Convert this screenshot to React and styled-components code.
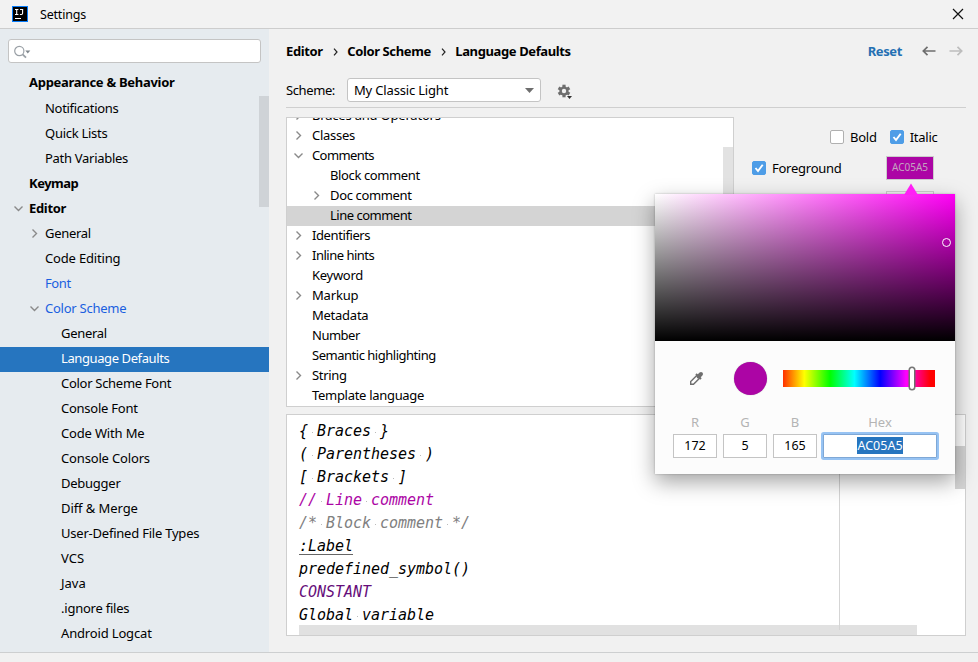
import React from "react";
import styled, { createGlobalStyle, css } from "styled-components";

const UI = `"Noto Sans", "Open Sans", sans-serif`;

const Global = createGlobalStyle`
  * { box-sizing: border-box; }
  body { margin: 0; background: #f2f2f2; overflow: hidden; }
`;

const Window = styled.div`
  position: relative;
  width: 978px;
  height: 662px;
  display: flex;
  flex-direction: column;
  overflow: hidden;
  background: #f1f1f1;
  color: #000;
  font: 13px/20px ${UI};
  white-space: nowrap;
`;

const TitleBar = styled.header`
  height: 29px;
  flex: none;
  display: flex;
  align-items: center;
  padding: 0 14px 0 12px;
  border-bottom: 1px solid #cdcdcd;
  background: #f2f2f2;
`;
const Logo = styled.svg`
  display: block;
  margin-right: 12px;
`;
const TitleText = styled.span`
  flex: 1;
  padding-top: 2px;
  font-size: 12.5px;
  letter-spacing: -0.2px;
`;

const Body = styled.div`
  height: 623px;
  display: flex;
`;
const Footer = styled.footer`
  flex: 1;
  border-top: 1px solid #cdcfd0;
`;

const Sidebar = styled.aside`
  width: 269px;
  flex: none;
  background: #e6ebef;
  padding-top: 10px;
`;
const SearchBox = styled.div`
  width: 253px;
  height: 24px;
  margin-left: 8px;
  padding: 4px 0 0 5px;
  border: 1px solid #c4c4c4;
  border-radius: 3px;
  background: #fff;
`;
const NavArea = styled.div`
  display: flex;
  margin-top: 9px;
  position: relative;
`;
const NavList = styled.nav`
  flex: 1;
`;
const NavRow = styled.div`
  height: 25px;
  display: flex;
  align-items: center;
  padding-left: ${(p) => 13 + p.$level * 16}px;
  padding-bottom: ${(p) => (p.$raised ? 5 : 3)}px;
  font-weight: ${(p) => (p.$bold ? 700 : 400)};
  letter-spacing: ${(p) => p.$tracking || 0}px;
  color: ${(p) => (p.$selected ? "#fff" : p.$link ? "#1a5fe0" : "#000")};
  background: ${(p) => (p.$selected ? "#2675bf" : "transparent")};
`;
const ArrowSlot = styled.span`
  width: ${(p) => p.$width || 16}px;
  flex: none;
  display: flex;
  align-items: center;
`;
const NavThumb = styled.div`
  position: absolute;
  right: 0;
  top: 24px;
  width: 10px;
  height: 111px;
  background: #cfd3d7;
`;

const Main = styled.main`
  width: 680px;
  margin-left: 17px;
  display: flex;
  flex-direction: column;
`;
const Crumbs = styled.div`
  height: 45px;
  display: flex;
  align-items: center;
  padding: 0 3px 2px 0;
  font-weight: 700;
  letter-spacing: -0.38px;
`;
const CrumbSep = styled.svg`
  margin: 2px 9px 0 10.5px;
`;
const Spacer = styled.span`
  flex: 1;
`;
const Reset = styled.span`
  color: #2470b3;
  margin-right: 20px;
`;
const NavArrow = styled.svg`
  margin-right: ${(p) => p.$gap || 0}px;
`;
const SchemeRow = styled.div`
  height: 34px;
  display: flex;
  align-items: center;
  border-bottom: 1px solid #cfcfcf;
  padding-bottom: 1px;
`;
const SchemeLabel = styled.span`
  width: 61px;
  letter-spacing: -0.4px;
`;
const Combo = styled.div`
  width: 194px;
  height: 24px;
  display: flex;
  align-items: center;
  justify-content: space-between;
  padding: 0 6px;
  border: 1px solid #c4c4c4;
  border-radius: 3px;
  background: #fff;
  letter-spacing: -0.17px;
`;
const Gear = styled.svg`
  margin: 2px 0 0 15px;
`;

const Upper = styled.div`
  display: flex;
  margin-top: 9px;
  height: 290px;
`;
const TreeBox = styled.div`
  position: relative;
  flex: none;
  width: 448px;
  border: 1px solid #cfcfcf;
  background: #fff;
  overflow: hidden;
`;
const TreeRows = styled.div`
  margin-top: -12px;
`;
const TreeRow = styled.div`
  height: 20px;
  display: flex;
  align-items: center;
  padding-bottom: 2px;
  padding-left: ${(p) => 6 + p.$level * 18}px;
  letter-spacing: ${(p) => p.$tracking || 0}px;
  background: ${(p) => (p.$selected ? "#d4d4d4" : "transparent")};
`;
const TreeThumb = styled.div`
  position: absolute;
  right: 0;
  top: 29px;
  width: 10px;
  height: 140px;
  background: #e2e2e2;
`;

const Attributes = styled.div`
  flex: 1;
  padding: 9px 0 0 18px;
`;
const AttrRow = styled.div`
  display: flex;
  align-items: center;
  height: ${(p) => p.$height}px;
  padding-left: ${(p) => p.$indent || 0}px;
  padding-right: ${(p) => p.$end || 0}px;
  letter-spacing: -0.25px;
`;
const CheckItem = styled.label`
  display: flex;
  align-items: center;
  gap: 6px;
  margin-right: ${(p) => p.$gap || 0}px;
`;
const Check = styled.span`
  width: 14px;
  height: 14px;
  border-radius: 2px;
  border: 1px solid ${(p) => (p.$on ? "#4e9de7" : "#b0b0b0")};
  background: ${(p) => (p.$on ? "#4e9de7" : "#fff")};
  svg { display: block; }
`;
const Swatch = styled.span`
  width: 48px;
  height: 24px;
  border: 1px solid #ccc;
  background: #ac05a5;
  color: #c3a3bf;
  font-size: 10px;
  letter-spacing: 0;
  line-height: 21px;
  text-align: center;
`;
const NextSwatch = styled.div`
  width: 48px;
  height: 24px;
  margin: 3px 0 0 134px;
  border: 1px solid #ccc;
`;

const Editor = styled.section`
  position: relative;
  height: 222px;
  margin-top: 7px;
  border: 1px solid #cfcfcf;
  background: #fff;
  overflow: hidden;
`;
const Code = styled.pre`
  margin: -18px 0 0 12px;
  font: italic 15px/23px "DejaVu Sans Mono", monospace;
  letter-spacing: -0.03px;
`;
const CodeLine = styled.div`
  height: 23px;
  color: ${(p) => p.$color || "#000"};
`;
const Label = styled.span`
  text-decoration: underline #666;
  text-underline-offset: 3px;
  text-decoration-thickness: 1px;
`;
const Blank = styled.span`
  background: linear-gradient(#bbb, #bbb) 4px 10px / 1px 1px no-repeat;
`;
const Margin = styled.div`
  position: absolute;
  left: 552px;
  top: 0;
  width: 1px;
  height: 215px;
  background: #d5d5d5;
`;
const HThumb = styled.div`
  position: absolute;
  left: 12px;
  bottom: 0;
  width: 618px;
  height: 10px;
  background: #e1e1e1;
`;
const VThumb = styled.div`
  position: absolute;
  right: 0;
  top: 31px;
  width: 10px;
  height: 43px;
  background: #d4d4d4;
`;

const Popup = styled.div`
  position: absolute;
  left: 655px;
  top: 194px;
  width: 300px;
  height: 280px;
  background: #fcfcfc;
  box-shadow: 0 8px 20px rgba(0, 0, 0, 0.36), 0 0 2px rgba(0, 0, 0, 0.25);
`;
const PopupTip = styled.svg`
  position: absolute;
  left: 248px;
  top: -11px;
`;
const Saturation = styled.div`
  position: relative;
  height: 147px;
  background: linear-gradient(to bottom, transparent, #000),
    linear-gradient(to right, #fff, #ff00f5);
`;
const SatMarker = styled.span`
  position: absolute;
  left: 287px;
  top: 44px;
  width: 9px;
  height: 9px;
  border: 1px solid #fff;
  border-radius: 50%;
`;
const HueRow = styled.div`
  height: 74px;
  display: flex;
  align-items: center;
  padding-left: 34px;
`;
const Current = styled.span`
  width: 33px;
  height: 33px;
  margin: 1px 16px 0 30px;
  border-radius: 50%;
  background: #ac05a5;
  box-shadow: 0 0 1px #999;
`;
const Hue = styled.div`
  position: relative;
  width: 152px;
  height: 17px;
  margin-top: 1px;
  background: linear-gradient(to right, #ff3000 0, #ff0 14%, #0f0 31%, #0ff 47%, #00f 64%, #f0f 81%, #f00 97%);
`;
const HueKnob = styled.span`
  position: absolute;
  left: 126px;
  top: -3px;
  width: 6px;
  height: 23px;
  border: 1px solid #6e6e6e;
  border-radius: 3px;
  background: #fff;
  box-shadow: 0 0 0 0.5px #6e6e6e;
`;
const Fields = styled.div`
  display: flex;
  margin-top: -3px;
  padding-left: 18px;
  gap: 6px;
`;
const Field = styled.div`
  width: ${(p) => p.$width || 44}px;
  text-align: center;
  color: #b4b4b4;
`;
const Input = styled.div`
  height: 24px;
  margin-top: 2px;
  border: 1px solid #c4c4c4;
  background: #fff;
  color: #000;
  line-height: 21px;
  font-size: 12.5px;
  ${(p) =>
    p.$focus &&
    css`
      border-color: #7fa8d6;
      box-shadow: 0 0 0 2px #97c3f3;
      border-radius: 1px;
    `}
`;
const Selected = styled.span`
  display: inline-block;
  height: 17px;
  line-height: 17px;
  vertical-align: top;
  margin-top: 2px;
  background: #2675bf;
  color: #fff;
`;

const Chevron = ({ open }) => (
  <svg width="11" height="11" viewBox="0 0 11 11" fill="none" stroke="#8a8a8a" strokeWidth="1.4">
    {open ? <path d="M1.5 3.5 L5.5 7.5 L9.5 3.5" /> : <path d="M3.5 1.5 L7.5 5.5 L3.5 9.5" />}
  </svg>
);
const Tick = () => (
  <svg width="12" height="12" viewBox="0 0 12 12" fill="none" stroke="#fff" strokeWidth="1.9">
    <path d="M2.5 6 L5 9 L9.7 2.7" />
  </svg>
);
const CrumbArrow = () => (
  <CrumbSep width="5" height="8" viewBox="0 0 5 8" fill="none" stroke="#222" strokeWidth="1.2">
    <path d="M1 0.7 L4 4 L1 7.3" />
  </CrumbSep>
);

const nav = [
  { t: "Appearance & Behavior", l: 0, bold: 1, raised: 1, ls: -0.29 },
  { t: "Notifications", l: 1, ls: -0.3 },
  { t: "Quick Lists", l: 1, ls: -0.27 },
  { t: "Path Variables", l: 1, ls: -0.29 },
  { t: "Keymap", l: 0, bold: 1, ls: -0.5 },
  { t: "Editor", l: 0, bold: 1, open: true, ls: -0.33 },
  { t: "General", l: 1, open: false, ls: -0.3 },
  { t: "Code Editing", l: 1, ls: -0.17 },
  { t: "Font", l: 1, link: 1, ls: -0.4 },
  { t: "Color Scheme", l: 1, link: 1, open: true, ls: -0.25 },
  { t: "General", l: 2, ls: -0.3 },
  { t: "Language Defaults", l: 2, sel: 1, ls: -0.4 },
  { t: "Color Scheme Font", l: 2, ls: -0.29 },
  { t: "Console Font", l: 2, ls: -0.25 },
  { t: "Code With Me", l: 2, ls: -0.17 },
  { t: "Console Colors", l: 2, ls: -0.16 },
  { t: "Debugger", l: 2, ls: -0.25 },
  { t: "Diff & Merge", l: 2, ls: -0.08 },
  { t: "User-Defined File Types", l: 2, ls: -0.22 },
  { t: "VCS", l: 2 },
  { t: "Java", l: 2 },
  { t: ".ignore files", l: 2, ls: -0.23 },
  { t: "Android Logcat", l: 2, ls: -0.16 },
];

const tree = [
  { t: "Braces and Operators", l: 0, open: false, ls: -0.2 },
  { t: "Classes", l: 0, open: false, ls: -0.28 },
  { t: "Comments", l: 0, open: true, ls: -0.6 },
  { t: "Block comment", l: 1, ls: -0.38 },
  { t: "Doc comment", l: 1, open: false, ls: -0.36 },
  { t: "Line comment", l: 1, sel: 1, ls: -0.5 },
  { t: "Identifiers", l: 0, open: false, ls: -0.4 },
  { t: "Inline hints", l: 0, open: false, ls: -0.5 },
  { t: "Keyword", l: 0, ls: -0.28 },
  { t: "Markup", l: 0, open: false, ls: -0.17 },
  { t: "Metadata", l: 0, ls: -0.25 },
  { t: "Number", l: 0, ls: -0.5 },
  { t: "Semantic highlighting", l: 0, ls: -0.48 },
  { t: "String", l: 0, open: false, ls: -0.33 },
  { t: "Template language", l: 0, ls: -0.3 },
];

const code = [
  { t: "Dot: . comma: , semicolon: ;" },
  { t: "{ Braces }" },
  { t: "( Parentheses )" },
  { t: "[ Brackets ]" },
  { t: "// Line comment", c: "#ac05a5" },
  { t: "/* Block comment */", c: "#808080" },
  { t: ":Label", label: 1 },
  { t: "predefined_symbol()" },
  { t: "CONSTANT", c: "#660e7a" },
  { t: "Global variable" },
];

const withBlanks = (text) =>
  text.split(/( )/).map((part, i) => (part === " " ? <Blank key={i}> </Blank> : part));

export default function App() {
  return (
    <Window>
      <Global />
      <TitleBar>
        <Logo width="16" height="16" viewBox="0 0 16 16">
          <rect width="16" height="16" fill="#087cfa" />
          <rect x="1" y="1" width="14" height="14" fill="#000" />
          <path d="M3 3.5H6.4M4.7 3.5V8.5M3 8.5H6.4M8 3.5H11.2M10.6 3.5V7.3Q10.6 8.5 9.4 8.5H7.9M3 12.5H9" fill="none" stroke="#fff" strokeWidth="1.1" />
        </Logo>
        <TitleText>Settings</TitleText>
        <svg width="12" height="12" viewBox="0 0 12 12" stroke="#111" strokeWidth="1.2">
          <path d="M1 1 L11 11 M11 1 L1 11" />
        </svg>
      </TitleBar>

      <Body>
        <Sidebar>
          <SearchBox>
            <svg width="18" height="14" viewBox="0 0 18 14" fill="none" stroke="#9aa0a6" strokeWidth="1.2">
              <circle cx="5.3" cy="6" r="4.6" />
              <path d="M8.6 9.3 L12 12.6" strokeWidth="1.8" />
              <path d="M11.3 5.5h5l-2.5 3z" fill="#7f868c" stroke="none" />
            </svg>
          </SearchBox>
          <NavArea>
            <NavList>
              {nav.map((n, i) => (
                <NavRow key={i} $level={n.l} $bold={n.bold} $raised={n.raised} $selected={n.sel} $link={n.link} $tracking={n.ls}>
                  <ArrowSlot>{n.open !== undefined && <Chevron open={n.open} />}</ArrowSlot>
                  <span>{n.t}</span>
                </NavRow>
              ))}
            </NavList>
            <NavThumb />
          </NavArea>
        </Sidebar>

        <Main>
          <Crumbs>
            <span>Editor</span>
            <CrumbArrow />
            <span>Color Scheme</span>
            <CrumbArrow />
            <span>Language Defaults</span>
            <Spacer />
            <Reset>Reset</Reset>
            <NavArrow $gap={13} width="14" height="10" viewBox="0 0 14 10" fill="none" stroke="#6e6e6e" strokeWidth="1.7"><path d="M13.5 5H1.5M5.5 0.8 L1.3 5 L5.5 9.2" /></NavArrow>
            <NavArrow width="14" height="10" viewBox="0 0 14 10" fill="none" stroke="#bdbdbd" strokeWidth="1.7"><path d="M0.5 5H12.5M8.5 0.8 L12.7 5 L8.5 9.2" /></NavArrow>
          </Crumbs>
          <SchemeRow>
            <SchemeLabel>Scheme:</SchemeLabel>
            <Combo>
              <span>My Classic Light</span>
              <svg width="9" height="5" viewBox="0 0 9 5"><path d="M0 0H9L4.5 5Z" fill="#6e6e6e" /></svg>
            </Combo>
            <Gear width="18" height="17" viewBox="0 0 18 17">
              <g transform="translate(8 8)" fill="#6e6e6e">
                {[0, 60, 120].map((a) => (
                  <rect key={a} x="-1.6" y="-6.3" width="3.2" height="12.6" transform={`rotate(${a})`} />
                ))}
                <circle r="4.6" />
                <circle r="2.2" fill="#f1f1f1" />
              </g>
              <path d="M11 13h5l-2.5 3z" fill="#333" />
            </Gear>
          </SchemeRow>

          <Upper>
            <TreeBox>
              <TreeRows>
                {tree.map((n, i) => (
                  <TreeRow key={i} $level={n.l} $selected={n.sel} $tracking={n.ls}>
                    <ArrowSlot $width={19}>{n.open !== undefined && <Chevron open={n.open} />}</ArrowSlot>
                    <span>{n.t}</span>
                  </TreeRow>
                ))}
              </TreeRows>
              <TreeThumb />
            </TreeBox>
            <Attributes>
              <AttrRow $height={22} $indent={78}>
                <CheckItem $gap={13}><Check /><span>Bold</span></CheckItem>
                <CheckItem><Check $on><Tick /></Check><span>Italic</span></CheckItem>
              </AttrRow>
              <AttrRow $height={40} $end={32}>
                <CheckItem><Check $on><Tick /></Check><span>Foreground</span></CheckItem>
                <Spacer />
                <Swatch>AC05A5</Swatch>
              </AttrRow>
              <NextSwatch />
            </Attributes>
          </Upper>

          <Editor>
            <Code>
              {code.map((c, i) => (
                <CodeLine key={i} $color={c.c}>
                  {c.label ? <Label>{c.t}</Label> : withBlanks(c.t)}
                </CodeLine>
              ))}
            </Code>
            <HThumb />
            <Margin />
            <VThumb />
          </Editor>
        </Main>
      </Body>
      <Footer />

      <Popup>
        <Saturation><SatMarker /></Saturation>
        <PopupTip width="16" height="12" viewBox="0 0 16 12"><path d="M1 12 L8 0.5 L15 12Z" fill="#ff1ff5" /></PopupTip>
        <HueRow>
          <svg width="15" height="15" viewBox="0 0 15 15" fill="none" stroke="#6e6e6e">
            <path d="M8 4.2 L1.7 10.5 V13.3 H4.5 L10.8 7" strokeWidth="1.4" />
            <path d="M7 3 L12 8" strokeWidth="2" />
            <path d="M9.5 5.5 L12 3" strokeWidth="4" strokeLinecap="round" />
          </svg>
          <Current />
          <Hue><HueKnob /></Hue>
        </HueRow>
        <Fields>
          <Field>R<Input>172</Input></Field>
          <Field>G<Input>5</Input></Field>
          <Field>B<Input>165</Input></Field>
          <Field $width={114}>Hex<Input $focus><Selected>AC05A5</Selected></Input></Field>
        </Fields>
      </Popup>
    </Window>
  );
}
